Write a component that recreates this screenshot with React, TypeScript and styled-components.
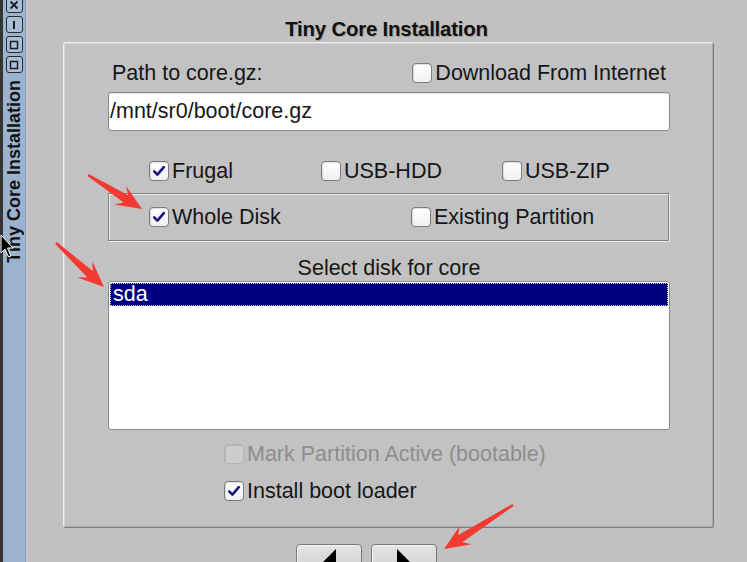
import React from 'react';
import styled, { createGlobalStyle } from 'styled-components';

const Global = createGlobalStyle`
  html, body { margin: 0; padding: 0; background: #c1c1c1; }
  body { font-family: "Liberation Sans", Arial, sans-serif; color: #161616; }
`;

const Page = styled.div`
  position: relative;
  display: flex;
  width: 747px;
  height: 562px;
  overflow: hidden;
  background: #c1c1c1;
`;

const TitleBar = styled.div`
  flex: none;
  width: 22px;
  border-left: 3px solid #343434;
  border-right: 1px solid #8aa0bb;
  background: #9cb3cf;
  display: flex;
  flex-direction: column;
  align-items: center;
`;

const WinButtons = styled.div`
  margin-top: -4px;
  display: flex;
  flex-direction: column;
  gap: 3px;
`;

const WinButton = styled.div`
  width: 17px;
  height: 17px;
  box-sizing: border-box;
  border: 1.5px solid #2a2a2a;
  border-radius: 3px;
  background: #a9bdd6;
  display: flex;
  align-items: center;
  justify-content: center;
`;

const VerticalTitle = styled.div`
  margin-top: 7px;
  writing-mode: vertical-rl;
  transform: rotate(180deg);
  font-weight: bold;
  font-size: 18px;
  line-height: 20px;
  color: #111;
  white-space: nowrap;
`;

const Content = styled.div`
  flex: 1;
  display: flex;
  flex-direction: column;
`;

const Title = styled.div`
  flex: none;
  margin-top: 17px;
  height: 24px;
  line-height: 24px;
  text-align: center;
  font-weight: bold;
  font-size: 20.4px;
  letter-spacing: -0.2px;
  color: #111;
  text-shadow: 1px 1px 0 rgba(0, 0, 0, 0.2);
`;

const Panel = styled.div`
  flex: none;
  margin: 1px 0 0 37px;
  width: 651px;
  height: 486px;
  box-sizing: border-box;
  padding: 18px 43px 0 44px;
  border: 1px solid;
  border-color: #ededed #7d7d7d #7d7d7d #ededed;
  border-radius: 3px;
  box-shadow: inset 1px 1px 0 #d4d4d4, inset -1px -1px 0 #a9a9a9;
  background: #c2c2c2;
  display: flex;
  flex-direction: column;
  font-size: 21.5px;
`;

const TopRow = styled.div`
  flex: none;
  height: 24px;
  display: flex;
  align-items: center;
  justify-content: space-between;
  padding: 0 4px;
`;

const Text = styled.span<{ $disabled?: boolean }>`
  line-height: 24px;
  white-space: nowrap;
  color: ${p => (p.$disabled ? '#8e8e8e' : '#161616')};
`;

const PathField = styled.div`
  flex: none;
  margin-top: 7px;
  height: 39px;
  box-sizing: border-box;
  border: 1px solid #8c8c8c;
  border-radius: 3px;
  box-shadow: inset 0 1px 1px rgba(0, 0, 0, 0.12);
  background: #fff;
  padding: 0 1px;
  line-height: 37px;
  white-space: nowrap;
`;

const CheckRow = styled.div<{ $top: number; $left: number }>`
  flex: none;
  margin-top: ${p => p.$top}px;
  height: 24px;
  display: flex;
  align-items: center;
  padding-left: ${p => p.$left}px;
`;

const CheckItem = styled.div<{ $width?: number }>`
  display: flex;
  align-items: center;
  gap: 3px;
  width: ${p => (p.$width ? `${p.$width}px` : 'auto')};
  flex: none;
`;

const Box = styled.div<{ $disabled?: boolean }>`
  width: 20px;
  height: 20px;
  box-sizing: border-box;
  border: 1px solid ${p => (p.$disabled ? '#b3b3b3' : '#7c7c7c')};
  border-radius: 4px;
  background: ${p => (p.$disabled ? '#cdcdcd' : 'linear-gradient(#ffffff, #f1f1f1)')};
  box-shadow: inset 1px 1px 1px rgba(0, 0, 0, 0.12);
  display: flex;
  align-items: center;
  justify-content: center;
  flex: none;
`;

const Group = styled.div`
  flex: none;
  margin-top: 10px;
  margin-right: 1px;
  height: 48px;
  box-sizing: border-box;
  border: 1px solid #808080;
  box-shadow: inset 1px 1px 0 #ececec, 1px 1px 0 #ececec;
  display: flex;
  align-items: center;
  padding-left: 40px;
`;

const SelectLabel = styled.div`
  flex: none;
  margin-top: 15px;
  height: 24px;
  line-height: 24px;
  text-align: center;
`;

const ListBox = styled.div`
  flex: none;
  margin-top: 1px;
  height: 149px;
  box-sizing: border-box;
  border: 1px solid #8a8a8a;
  border-radius: 3px;
  background: #fff;
  padding: 1px;
`;

const SelectedRow = styled.div`
  height: 23px;
  box-sizing: border-box;
  background: #000080;
  color: #fff;
  border: 1px dotted #c8c8e8;
  padding-left: 2px;
  line-height: 21px;
`;

const NavRow = styled.div`
  flex: none;
  margin: 16px 0 0 270px;
  display: flex;
  gap: 9px;
`;

const NavButton = styled.div`
  width: 66px;
  height: 40px;
  box-sizing: border-box;
  border: 1px solid #7a7a7a;
  border-radius: 4px;
  background: linear-gradient(#e4e4e4, #c9c9c9);
  box-shadow: inset 1px 1px 0 #f4f4f4;
  display: flex;
  justify-content: center;
  padding-top: 4px;
`;

const Overlay = styled.svg`
  position: absolute;
  left: 0;
  top: 0;
  pointer-events: none;
`;

const Check = () => (
  <svg width="14" height="14" viewBox="0 0 14 14">
    <path d="M2.2 7.4 L5.4 10.6 L11.8 3.2" fill="none" stroke="#17177a" strokeWidth="2.6" strokeLinecap="round" strokeLinejoin="round" />
  </svg>
);

type CBProps = { label: string; checked?: boolean; disabled?: boolean; width?: number };
const CheckBox = ({ label, checked, disabled, width }: CBProps) => (
  <CheckItem $width={width}>
    <Box $disabled={disabled}>{checked && <Check />}</Box>
    <Text $disabled={disabled}>{label}</Text>
  </CheckItem>
);

function arrowPoints(tx: number, ty: number, px: number, py: number) {
  const dx = px - tx;
  const dy = py - ty;
  const len = Math.hypot(dx, dy);
  const ux = dx / len;
  const uy = dy / len;
  const nx = -uy;
  const ny = ux;
  const L = 26;
  const W = 11;
  const bx = px - ux * L;
  const by = py - uy * L;
  const sx = px - ux * (L - 7);
  const sy = py - uy * (L - 7);
  const pts = [
    [tx + nx * 1.2, ty + ny * 1.2],
    [sx + nx * 4.2, sy + ny * 4.2],
    [bx + nx * W, by + ny * W],
    [px, py],
    [bx - nx * W, by - ny * W],
    [sx - nx * 4.2, sy - ny * 4.2],
    [tx - nx * 1.2, ty - ny * 1.2],
  ];
  return pts.map(p => `${p[0].toFixed(1)},${p[1].toFixed(1)}`).join(' ');
}

export default function App() {
  return (
    <>
      <Global />
      <Page>
        <TitleBar>
          <WinButtons>
            <WinButton>
              <svg width="10" height="10" viewBox="0 0 10 10">
                <path d="M1.5 1.5 L8.5 8.5 M8.5 1.5 L1.5 8.5" stroke="#1e1e1e" strokeWidth="1.8" />
              </svg>
            </WinButton>
            <WinButton>
              <svg width="10" height="10" viewBox="0 0 10 10">
                <path d="M5 1 L5 9" stroke="#1e1e1e" strokeWidth="2" />
              </svg>
            </WinButton>
            <WinButton>
              <svg width="10" height="10" viewBox="0 0 10 10">
                <rect x="1.5" y="1.5" width="7" height="7" fill="none" stroke="#1e1e1e" strokeWidth="1.5" />
              </svg>
            </WinButton>
            <WinButton>
              <svg width="10" height="10" viewBox="0 0 10 10">
                <rect x="1.5" y="1.5" width="7" height="7" fill="none" stroke="#1e1e1e" strokeWidth="1.5" />
              </svg>
            </WinButton>
          </WinButtons>
          <VerticalTitle>Tiny Core Installation</VerticalTitle>
        </TitleBar>
        <Content>
          <Title>Tiny Core Installation</Title>
          <Panel>
            <TopRow>
              <Text>Path to core.gz:</Text>
              <CheckBox label="Download From Internet" />
            </TopRow>
            <PathField>/mnt/sr0/boot/core.gz</PathField>
            <CheckRow $top={28} $left={41}>
              <CheckBox label="Frugal" checked width={172} />
              <CheckBox label="USB-HDD" width={181} />
              <CheckBox label="USB-ZIP" />
            </CheckRow>
            <Group>
              <CheckBox label="Whole Disk" checked width={262} />
              <CheckBox label="Existing Partition" />
            </Group>
            <SelectLabel>Select disk for core</SelectLabel>
            <ListBox>
              <SelectedRow>sda</SelectedRow>
            </ListBox>
            <CheckRow $top={12} $left={116}>
              <CheckBox label="Mark Partition Active (bootable)" disabled />
            </CheckRow>
            <CheckRow $top={13} $left={116}>
              <CheckBox label="Install boot loader" checked />
            </CheckRow>
          </Panel>
          <NavRow>
            <NavButton>
              <svg width="14" height="28" viewBox="0 0 14 28">
                <polygon points="14,0 14,28 0,14" fill="#000" />
              </svg>
            </NavButton>
            <NavButton>
              <svg width="14" height="28" viewBox="0 0 14 28">
                <polygon points="0,0 0,28 14,14" fill="#000" />
              </svg>
            </NavButton>
          </NavRow>
        </Content>
        <Overlay width="747" height="562" viewBox="0 0 747 562">
          <polygon points={arrowPoints(88, 175, 142, 209)} fill="#f23a33" />
          <polygon points={arrowPoints(56, 243, 104, 287)} fill="#f23a33" />
          <polygon points={arrowPoints(513, 505, 444, 549)} fill="#f23a33" />
          <path d="M1 235 L1 253 L5 249 L8.5 257 L11 256 L7.5 248 L13 248 Z" fill="#000" stroke="#fff" strokeWidth="1" />
        </Overlay>
      </Page>
    </>
  );
}
